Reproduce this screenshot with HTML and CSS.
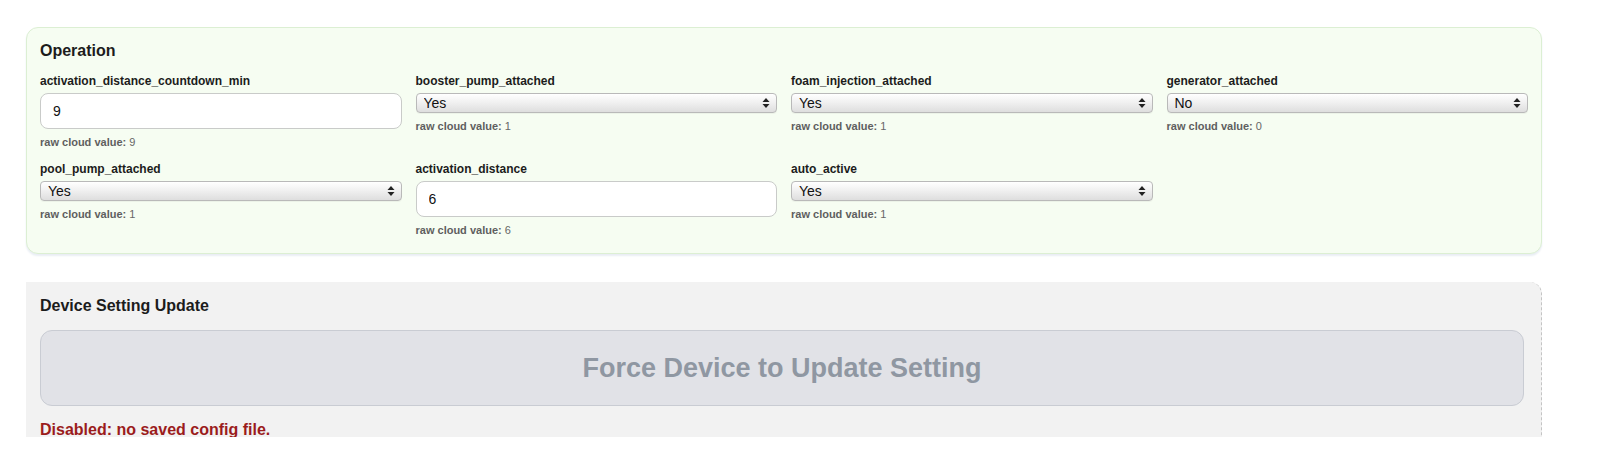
FILE: index.html
```html
<!DOCTYPE html>
<html>
<head>
<meta charset="utf-8">
<link rel="stylesheet" href="styles.css">
</head>
<body>
<div class="viewport">
  <div class="page">
    <section class="panel op">
      <h2 class="title">Operation</h2>
      <div class="grid">
        <div class="field">
          <label class="label">activation_distance_countdown_min</label>
          <input class="text" type="text" value="9">
          <div class="raw"><b>raw cloud value:</b> 9</div>
        </div>
        <div class="field">
          <label class="label">booster_pump_attached</label>
          <div class="sel"><select><option>Yes</option><option>No</option></select><svg class="arr" width="8" height="12" viewBox="0 0 8 12"><path d="M4 1 L7.5 5 H0.5 Z M4 11 L0.5 7 H7.5 Z" fill="#222"/></svg></div>
          <div class="raw"><b>raw cloud value:</b> 1</div>
        </div>
        <div class="field">
          <label class="label">foam_injection_attached</label>
          <div class="sel"><select><option>Yes</option><option>No</option></select><svg class="arr" width="8" height="12" viewBox="0 0 8 12"><path d="M4 1 L7.5 5 H0.5 Z M4 11 L0.5 7 H7.5 Z" fill="#222"/></svg></div>
          <div class="raw"><b>raw cloud value:</b> 1</div>
        </div>
        <div class="field">
          <label class="label">generator_attached</label>
          <div class="sel"><select><option>No</option><option>Yes</option></select><svg class="arr" width="8" height="12" viewBox="0 0 8 12"><path d="M4 1 L7.5 5 H0.5 Z M4 11 L0.5 7 H7.5 Z" fill="#222"/></svg></div>
          <div class="raw"><b>raw cloud value:</b> 0</div>
        </div>
        <div class="field">
          <label class="label">pool_pump_attached</label>
          <div class="sel"><select><option>Yes</option><option>No</option></select><svg class="arr" width="8" height="12" viewBox="0 0 8 12"><path d="M4 1 L7.5 5 H0.5 Z M4 11 L0.5 7 H7.5 Z" fill="#222"/></svg></div>
          <div class="raw"><b>raw cloud value:</b> 1</div>
        </div>
        <div class="field">
          <label class="label">activation_distance</label>
          <input class="text" type="text" value="6">
          <div class="raw"><b>raw cloud value:</b> 6</div>
        </div>
        <div class="field">
          <label class="label">auto_active</label>
          <div class="sel"><select><option>Yes</option><option>No</option></select><svg class="arr" width="8" height="12" viewBox="0 0 8 12"><path d="M4 1 L7.5 5 H0.5 Z M4 11 L0.5 7 H7.5 Z" fill="#222"/></svg></div>
          <div class="raw"><b>raw cloud value:</b> 1</div>
        </div>
      </div>
    </section>
    <section class="panel upd">
      <h2 class="title">Device Setting Update</h2>
      <button class="force" disabled>Force Device to Update Setting</button>
      <p class="err">Disabled: no saved config file.</p>
    </section>
  </div>
</div>
</body>
</html>
```
FILE: styles.css
```css
* { box-sizing: border-box; }
html, body { margin: 0; padding: 0; background: #fff; }
body { font-family: "Liberation Sans", Arial, Helvetica, sans-serif; color: #1f1f1f; }

.viewport { height: 437px; overflow: hidden; }
.page { padding: 27px 0 0 26px; width: 1542px; display: flex; flex-direction: column; gap: 28px; }

.panel { padding: 14px 14px 17px 14px; }
.op {
  background: #f6fdf2;
  border: 1px solid #dcefd3;
  border-radius: 12px;
  box-shadow: 0 2px 2px #e9eef4;
  padding: 13px 13px 16px 13px;
}
.title { margin: 0; font-size: 16px; line-height: 20px; font-weight: 700; color: #1c1c1c; }

.grid {
  margin-top: 13px;
  display: grid;
  grid-template-columns: repeat(4, 1fr);
  column-gap: 14px;
  row-gap: 13px;
  align-items: start;
}
.field { display: flex; flex-direction: column; }
.label { font-size: 12px; line-height: 14px; font-weight: 700; color: #1c1c1c; margin-bottom: 5px; }

.text {
  height: 36px;
  border: 1px solid #c9cbc9;
  border-radius: 8px;
  background: #fff;
  padding: 0 12px;
  font-family: "Liberation Sans", Arial, sans-serif;
  font-size: 14px;
  color: #111;
  outline: none;
}

.sel { position: relative; height: 20px; }
.sel select {
  appearance: none;
  -webkit-appearance: none;
  width: 100%;
  height: 20px;
  border: 1px solid #b9b9b9;
  border-radius: 4px;
  background: linear-gradient(#ffffff 0%, #f1f1f1 45%, #dedede 100%);
  font-family: "Liberation Sans", Arial, sans-serif;
  font-size: 14px;
  color: #111;
  padding: 0 0 0 7px;
  line-height: 18px;
  box-shadow: 0 1px 0 rgba(0,0,0,0.04);
}
.arr { position: absolute; right: 7px; top: 4px; pointer-events: none; }

.raw { margin-top: 7px; font-size: 11px; line-height: 13px; color: #666; }
.raw b { font-weight: 700; color: #5f5f5f; }

.upd {
  background: #f2f2f2;
  border-right: 1px dashed #c4c4c4;
  border-top-right-radius: 12px;
  padding: 14px 17px 20px 14px;
}
.force {
  display: block;
  width: 100%;
  margin-top: 14px;
  height: 76px;
  border: 1px solid #c9ccd3;
  border-radius: 12px;
  background: #e1e2e7;
  color: #8f97a2;
  font-family: "Liberation Sans", Arial, sans-serif;
  font-size: 27px;
  font-weight: 700;
}
.err { margin: 14px 0 0 0; font-size: 16px; line-height: 20px; font-weight: 700; color: #9b1c1c; }
```
